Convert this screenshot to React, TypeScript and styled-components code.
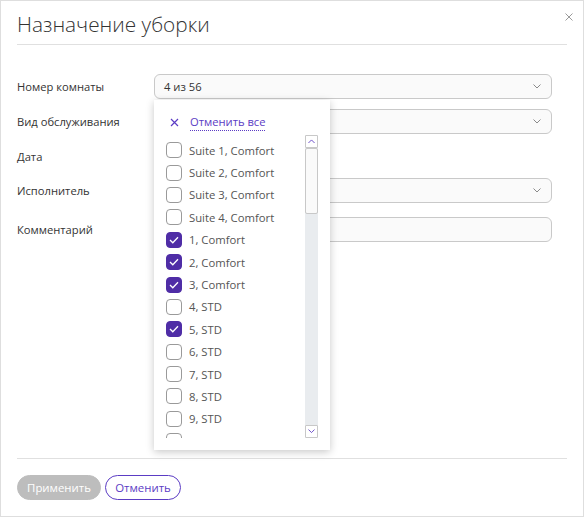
import React from "react";
import styled, { createGlobalStyle } from "styled-components";

const GlobalStyle = createGlobalStyle`
  html, body { margin: 0; padding: 0; background: #fff; }
  body { font-family: "Open Sans", "Noto Sans", sans-serif; color: #333; }
  * { box-sizing: border-box; }
`;

const PURPLE = "#4f2da6";
const LINK = "#5b3cc4";

const Modal = styled.div`
  position: relative;
  width: 584px;
  height: 517px;
  border: 1px solid #dedede;
  background: #fff;
  display: flex;
  flex-direction: column;
  padding: 0 16px;
`;

const Header = styled.div`
  height: 44px;
  border-bottom: 1px solid #e0e0e0;
  display: flex;
  align-items: flex-start;
  padding-top: 9px;
`;

const Title = styled.h1`
  margin: 0;
  font-size: 20.8px;
  font-weight: 300;
  line-height: 28px;
  color: #333;
`;

const Close = styled.button`
  position: absolute;
  top: 10px;
  right: 8px;
  width: 12px;
  height: 12px;
  padding: 0;
  border: 0;
  background: none;
  display: flex;
  align-items: center;
  justify-content: center;
`;

const Body = styled.div`
  flex: 1;
  padding: 29px 15px 0 0;
`;

const Form = styled.div`
  display: grid;
  grid-template-columns: 137px 1fr;
  grid-template-rows: 25px 25px 24px 25px 29px;
  row-gap: 10px;
  align-items: start;
`;

const Label = styled.div<{ $shift?: number }>`
  font-size: 11.2px;
  line-height: 25px;
  height: 25px;
  color: #333;
  margin-top: ${(p) => p.$shift ?? 0}px;
`;

const FieldWrap = styled.div<{ $shift?: number }>`
  position: relative;
  height: 25px;
  margin-top: ${(p) => p.$shift ?? 0}px;
`;

const Select = styled.div`
  height: 25px;
  border: 1px solid #c9c9c9;
  border-radius: 6px;
  background: #fafafa;
  display: flex;
  align-items: center;
  justify-content: space-between;
  padding: 0 10px 0 9px;
  font-size: 11.2px;
  color: #333;
`;

const Input = styled.div`
  height: 25px;
  border: 1px solid #c9c9c9;
  border-radius: 6px;
  background: #fafafa;
`;

const Dropdown = styled.div`
  position: absolute;
  top: 26px;
  left: 0;
  width: 176px;
  height: 350px;
  background: #fff;
  box-shadow: 0 2px 8px rgba(0, 0, 0, 0.22);
  padding: 14px 12px 12px 12px;
  display: flex;
  flex-direction: column;
  z-index: 5;
`;

const ClearRow = styled.div`
  display: flex;
  align-items: center;
  height: 18px;
  padding-left: 4px;
  margin-bottom: 4px;
`;

const ClearLink = styled.span`
  margin-left: 11px;
  font-size: 11.2px;
  color: ${LINK};
  line-height: 16px;
  border-bottom: 1px dotted ${LINK};
`;

const ListArea = styled.div`
  display: flex;
  height: 303px;
  flex: none;
`;

const List = styled.div`
  flex: 1;
  overflow: hidden;
  padding-top: 4px;
`;

const Item = styled.div`
  height: 22.4px;
  display: flex;
  align-items: center;
  gap: 7px;
  font-size: 11.3px;
  color: #555;
  white-space: nowrap;
`;

const Box = styled.span<{ $checked: boolean }>`
  width: 16px;
  height: 16px;
  flex: none;
  border-radius: 4px;
  border: 1px solid ${(p) => (p.$checked ? PURPLE : "#9a9a9a")};
  background: ${(p) => (p.$checked ? PURPLE : "#fff")};
  display: flex;
  align-items: center;
  justify-content: center;
`;

const Scrollbar = styled.div`
  width: 13px;
  display: flex;
  flex-direction: column;
  background: #e9ecef;
  margin-left: 4px;
`;

const ScrollBtn = styled.div`
  width: 13px;
  height: 13px;
  border: 1px solid #c8c8c8;
  background: #fff;
  display: flex;
  align-items: center;
  justify-content: center;
  border-radius: 1px;
`;

const Thumb = styled.div`
  height: 66px;
  border: 1px solid #c8c8c8;
  border-radius: 2px;
  background: #fafafa;
`;

const Track = styled.div`
  flex: 1;
`;

const Footer = styled.div`
  height: 58px;
  border-top: 1px solid #e0e0e0;
  display: flex;
  align-items: flex-start;
  gap: 4px;
  padding-top: 16px;
`;

const Button = styled.button<{ $primary?: boolean }>`
  height: 25px;
  border-radius: 13px;
  font-family: inherit;
  font-size: 11.4px;
  padding: 0;
  border: 1px solid ${(p) => (p.$primary ? "#bdbdbd" : LINK)};
  background: ${(p) => (p.$primary ? "#bdbdbd" : "#fff")};
  color: ${(p) => (p.$primary ? "#fff" : LINK)};
  width: ${(p) => (p.$primary ? 84 : 76)}px;
`;

const Chevron = ({ color = "#8a8a8a", up = false, size = 8 }: { color?: string; up?: boolean; size?: number }) => (
  <svg width={size} height={size / 2 + 1} viewBox="0 0 8 5" style={{ display: "block" }}>
    <path
      d={up ? "M0.5 4.5 L4 1 L7.5 4.5" : "M0.5 0.5 L4 4 L7.5 0.5"}
      fill="none"
      stroke={color}
      strokeWidth="1"
    />
  </svg>
);

const Check = () => (
  <svg width="10" height="8" viewBox="0 0 10 8">
    <path d="M1 4 L3.8 6.8 L9 1.2" fill="none" stroke="#fff" strokeWidth="1.3" />
  </svg>
);

const items: [string, boolean][] = [
  ["Suite 1, Comfort", false],
  ["Suite 2, Comfort", false],
  ["Suite 3, Comfort", false],
  ["Suite 4, Comfort", false],
  ["1, Comfort", true],
  ["2, Comfort", true],
  ["3, Comfort", true],
  ["4, STD", false],
  ["5, STD", true],
  ["6, STD", false],
  ["7, STD", false],
  ["8, STD", false],
  ["9, STD", false],
  ["10, STD", false],
];

export default function App() {
  return (
    <>
      <GlobalStyle />
      <Modal>
        <Header>
          <Title>Назначение уборки</Title>
        </Header>
        <Close aria-label="close">
          <svg width="8" height="8" viewBox="0 0 8 8">
            <path d="M0.5 0.5 L7.5 7.5 M7.5 0.5 L0.5 7.5" stroke="#9a9a9a" strokeWidth="1" />
          </svg>
        </Close>
        <Body>
          <Form>
            <Label>Номер комнаты</Label>
            <FieldWrap>
              <Select>
                <span>4 из 56</span>
                <Chevron />
              </Select>
              <Dropdown>
                <ClearRow>
                  <svg width="9" height="9" viewBox="0 0 9 9">
                    <path d="M1 1 L8 8 M8 1 L1 8" stroke={LINK} strokeWidth="1.2" />
                  </svg>
                  <ClearLink>Отменить все</ClearLink>
                </ClearRow>
                <ListArea>
                  <List>
                    {items.map(([name, checked]) => (
                      <Item key={name}>
                        <Box $checked={checked}>{checked && <Check />}</Box>
                        {name}
                      </Item>
                    ))}
                  </List>
                  <Scrollbar>
                    <ScrollBtn>
                      <Chevron up color={LINK} size={7} />
                    </ScrollBtn>
                    <Thumb />
                    <Track />
                    <ScrollBtn>
                      <Chevron color={LINK} size={7} />
                    </ScrollBtn>
                  </Scrollbar>
                </ListArea>
              </Dropdown>
            </FieldWrap>
            <Label>Вид обслуживания</Label>
            <Select>
              <span />
              <Chevron />
            </Select>
            <Label>Дата</Label>
            <div />
            <Label>Исполнитель</Label>
            <Select>
              <span />
              <Chevron />
            </Select>
            <Label $shift={4}>Комментарий</Label>
            <FieldWrap $shift={4}>
              <Input />
            </FieldWrap>
          </Form>
        </Body>
        <Footer>
          <Button $primary>Применить</Button>
          <Button>Отменить</Button>
        </Footer>
      </Modal>
    </>
  );
}
